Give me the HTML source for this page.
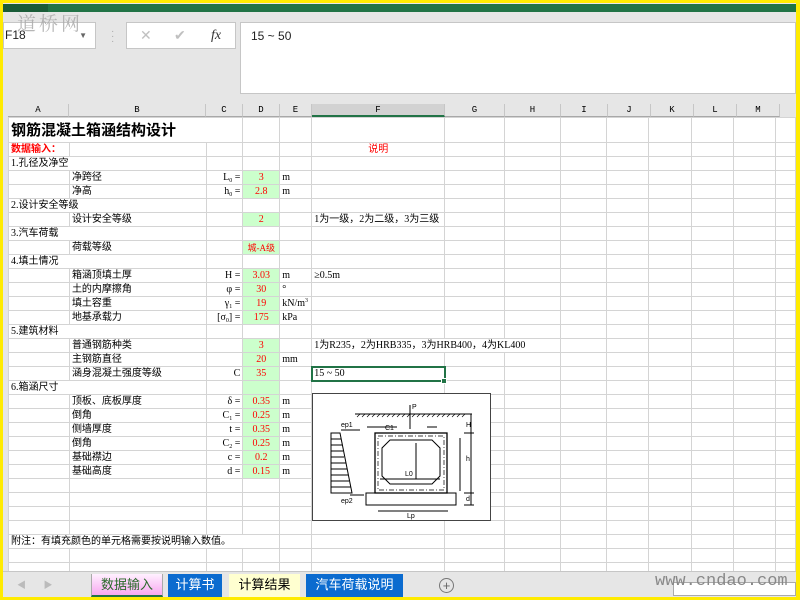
<!DOCTYPE html>
<html><head><meta charset="utf-8"><style>
*{margin:0;padding:0;box-sizing:border-box}
body{width:800px;height:600px;overflow:hidden;background:#ffeb00;position:relative;font-family:"Liberation Sans","Noto Sans CJK SC",sans-serif}
.abs{position:absolute}
#app{position:absolute;left:3px;top:3px;width:793px;height:594px;background:#e6e6e6;overflow:hidden}
table{position:absolute;left:5px;top:114px;border-collapse:collapse;table-layout:fixed;background:#fff}
td{border:1px solid #d4d4d4;height:14px;max-height:14px;font-size:10px;line-height:12px;padding:0 2px;white-space:nowrap;overflow:visible;font-family:"Liberation Serif","Noto Sans CJK SC",serif;color:#000}
tr{height:14px}
tr.t,tr.t td{height:25px}
sub,sup{font-size:6px;line-height:0;vertical-align:baseline;position:relative}
sub{top:2px}sup{top:-4px}
td.g{background:#ccffcc}
.r{color:#f00;text-align:center}
.c{text-align:right}
.hd{position:absolute;top:101px;height:13px;font-family:"Liberation Mono",monospace;font-size:9px;text-align:center;line-height:13px;border-right:1px solid #c6c6c6;border-bottom:1px solid #a8a8a8}
.tab{position:absolute;top:571px;height:23px;font-size:13px;line-height:22px;text-align:center;font-family:"Liberation Sans","Noto Sans CJK SC",sans-serif}
</style></head><body>
<div id="app">
<div class="abs" style="left:0;top:1px;width:793px;height:8px;background:#217346"></div>
<div class="abs" style="left:0;top:1px;width:45px;height:8px;background:#1a5c38"></div>
<div class="abs" style="left:0;top:19px;width:93px;height:27px;background:#fff;border:1px solid #c6c6c6;font-size:12px;line-height:25px;color:#222;padding-left:1px">F18<span style="position:absolute;right:8px;top:0;font-size:8px;color:#666">▼</span></div>
<div class="abs" style="left:14px;top:6px;font-size:19px;color:#aaa;font-family:'Noto Serif CJK SC',serif;letter-spacing:3px;opacity:.85">道桥网</div>
<div class="abs" style="left:108px;top:26px;color:#aaa;font-size:10px;line-height:5px">·<br>·<br>·</div>
<div class="abs" style="left:123px;top:19px;width:110px;height:27px;background:#fff;border:1px solid #c6c6c6;font-size:14px;line-height:25px;color:#c0c0c0">
<span style="position:absolute;left:13px">✕</span><span style="position:absolute;left:47px">✔</span><span style="position:absolute;left:84px;color:#333;font-style:italic;font-family:'Liberation Serif',serif">fx</span></div>
<div class="abs" style="left:237px;top:19px;width:556px;height:72px;background:#fff;border:1px solid #c6c6c6;font-size:12px;padding:6px 0 0 10px;color:#222">15 ~ 50</div>

<div class="hd" style="left:5px;width:61px">A</div>
<div class="hd" style="left:66px;width:137px">B</div>
<div class="hd" style="left:203px;width:37px">C</div>
<div class="hd" style="left:240px;width:37px">D</div>
<div class="hd" style="left:277px;width:32px">E</div>
<div class="hd" style="left:309px;width:133px;background:#d2d2d2;border-bottom:2px solid #217346">F</div>
<div class="hd" style="left:442px;width:60px">G</div>
<div class="hd" style="left:502px;width:56px">H</div>
<div class="hd" style="left:558px;width:47px">I</div>
<div class="hd" style="left:605px;width:43px">J</div>
<div class="hd" style="left:648px;width:43px">K</div>
<div class="hd" style="left:691px;width:43px">L</div>
<div class="hd" style="left:734px;width:43px">M</div>

<table>
<colgroup><col style="width:61px"><col style="width:137px"><col style="width:37px"><col style="width:37px"><col style="width:32px"><col style="width:133px"><col style="width:60px"><col style="width:56px"><col style="width:47px"><col style="width:43px"><col style="width:43px"><col style="width:43px"><col style="width:43px"><col style="width:20px"></colgroup>
<tr class="t"><td colspan="2" style="font-size:15px;font-weight:bold;font-family:'Noto Sans CJK SC',sans-serif;border-right-color:transparent">钢筋混凝土箱涵结构设计</td><td></td><td></td><td></td><td></td><td></td><td></td><td></td><td></td><td></td><td></td><td></td><td></td></tr>
<tr><td style="color:#f00;font-weight:bold">数据输入：</td><td></td><td></td><td></td><td></td><td class="r">说明</td><td></td><td></td><td></td><td></td><td></td><td></td><td></td><td></td></tr>
<tr><td colspan="2">1.孔径及净空</td><td></td><td></td><td></td><td></td><td></td><td></td><td></td><td></td><td></td><td></td><td></td><td></td></tr>
<tr><td></td><td>净跨径</td><td class="c">L<sub>0</sub> =</td><td class="g r">3</td><td>m</td><td></td><td></td><td></td><td></td><td></td><td></td><td></td><td></td><td></td></tr>
<tr><td></td><td>净高</td><td class="c">h<sub>0</sub> =</td><td class="g r">2.8</td><td>m</td><td></td><td></td><td></td><td></td><td></td><td></td><td></td><td></td><td></td></tr>
<tr><td colspan="2">2.设计安全等级</td><td></td><td></td><td></td><td></td><td></td><td></td><td></td><td></td><td></td><td></td><td></td><td></td></tr>
<tr><td></td><td>设计安全等级</td><td></td><td class="g r">2</td><td></td><td>1为一级，2为二级，3为三级</td><td></td><td></td><td></td><td></td><td></td><td></td><td></td><td></td></tr>
<tr><td colspan="2">3.汽车荷载</td><td></td><td></td><td></td><td></td><td></td><td></td><td></td><td></td><td></td><td></td><td></td><td></td></tr>
<tr><td></td><td>荷载等级</td><td></td><td class="g r" style="font-size:9px">城-A级</td><td></td><td></td><td></td><td></td><td></td><td></td><td></td><td></td><td></td><td></td></tr>
<tr><td colspan="2">4.填土情况</td><td></td><td></td><td></td><td></td><td></td><td></td><td></td><td></td><td></td><td></td><td></td><td></td></tr>
<tr><td></td><td>箱涵顶填土厚</td><td class="c">H =</td><td class="g r">3.03</td><td>m</td><td>≥0.5m</td><td></td><td></td><td></td><td></td><td></td><td></td><td></td><td></td></tr>
<tr><td></td><td>土的内摩擦角</td><td class="c">φ =</td><td class="g r">30</td><td>°</td><td></td><td></td><td></td><td></td><td></td><td></td><td></td><td></td><td></td></tr>
<tr><td></td><td>填土容重</td><td class="c">γ<sub>1</sub> =</td><td class="g r">19</td><td>kN/m<sup>3</sup></td><td></td><td></td><td></td><td></td><td></td><td></td><td></td><td></td><td></td></tr>
<tr><td></td><td>地基承载力</td><td class="c">[σ<sub>0</sub>] =</td><td class="g r">175</td><td>kPa</td><td></td><td></td><td></td><td></td><td></td><td></td><td></td><td></td><td></td></tr>
<tr><td colspan="2">5.建筑材料</td><td></td><td></td><td></td><td></td><td></td><td></td><td></td><td></td><td></td><td></td><td></td><td></td></tr>
<tr><td></td><td>普通钢筋种类</td><td></td><td class="g r">3</td><td></td><td colspan="3">1为R235，2为HRB335，3为HRB400，4为KL400</td><td></td><td></td><td></td><td></td><td></td><td></td></tr>
<tr><td></td><td>主钢筋直径</td><td></td><td class="g r">20</td><td>mm</td><td></td><td></td><td></td><td></td><td></td><td></td><td></td><td></td><td></td></tr>
<tr><td></td><td>涵身混凝土强度等级</td><td class="c">C</td><td class="g r">35</td><td></td><td style="outline:2px solid #217346;outline-offset:-1px">15 ~ 50</td><td></td><td></td><td></td><td></td><td></td><td></td><td></td><td></td></tr>
<tr><td colspan="2">6.箱涵尺寸</td><td></td><td class="g"></td><td></td><td></td><td></td><td></td><td></td><td></td><td></td><td></td><td></td><td></td></tr>
<tr><td></td><td>顶板、底板厚度</td><td class="c">δ =</td><td class="g r">0.35</td><td>m</td><td></td><td></td><td></td><td></td><td></td><td></td><td></td><td></td><td></td></tr>
<tr><td></td><td>倒角</td><td class="c">C<sub>1</sub> =</td><td class="g r">0.25</td><td>m</td><td></td><td></td><td></td><td></td><td></td><td></td><td></td><td></td><td></td></tr>
<tr><td></td><td>侧墙厚度</td><td class="c">t =</td><td class="g r">0.35</td><td>m</td><td></td><td></td><td></td><td></td><td></td><td></td><td></td><td></td><td></td></tr>
<tr><td></td><td>倒角</td><td class="c">C<sub>2</sub> =</td><td class="g r">0.25</td><td>m</td><td></td><td></td><td></td><td></td><td></td><td></td><td></td><td></td><td></td></tr>
<tr><td></td><td>基础襟边</td><td class="c">c =</td><td class="g r">0.2</td><td>m</td><td></td><td></td><td></td><td></td><td></td><td></td><td></td><td></td><td></td></tr>
<tr><td></td><td>基础高度</td><td class="c">d =</td><td class="g r">0.15</td><td>m</td><td></td><td></td><td></td><td></td><td></td><td></td><td></td><td></td><td></td></tr>
<tr><td></td><td></td><td></td><td></td><td></td><td></td><td></td><td></td><td></td><td></td><td></td><td></td><td></td><td></td></tr>
<tr><td></td><td></td><td></td><td></td><td></td><td></td><td></td><td></td><td></td><td></td><td></td><td></td><td></td><td></td></tr>
<tr><td></td><td></td><td></td><td></td><td></td><td></td><td></td><td></td><td></td><td></td><td></td><td></td><td></td><td></td></tr>
<tr><td></td><td></td><td></td><td></td><td></td><td></td><td></td><td></td><td></td><td></td><td></td><td></td><td></td><td></td></tr>
<tr><td colspan="4">附注：有填充颜色的单元格需要按说明输入数值。</td><td></td><td></td><td></td><td></td><td></td><td></td><td></td><td></td><td></td><td></td></tr>
<tr><td></td><td></td><td></td><td></td><td></td><td></td><td></td><td></td><td></td><td></td><td></td><td></td><td></td><td></td></tr>
<tr><td></td><td></td><td></td><td></td><td></td><td></td><td></td><td></td><td></td><td></td><td></td><td></td><td></td><td></td></tr>
</table>
<div class="abs" style="left:438px;top:375px;width:6px;height:6px;background:#217346;border:1px solid #fff"></div>

<svg class="abs" style="left:309px;top:390px" width="179" height="128" viewBox="0 0 179 128">
<rect x="0.5" y="0.5" width="178" height="127" fill="#fff" stroke="#444"/>
<g stroke="#000" fill="none" stroke-width="1">
<line x1="43" y1="21" x2="160" y2="21"/>
<g stroke-width="0.7">
<path d="M45 24l3-3M50 24l3-3M55 24l3-3M60 24l3-3M65 24l3-3M70 24l3-3M75 24l3-3M80 24l3-3M85 24l3-3M90 24l3-3M95 24l3-3M100 24l3-3M105 24l3-3M110 24l3-3M115 24l3-3M120 24l3-3M125 24l3-3M130 24l3-3M135 24l3-3M140 24l3-3M145 24l3-3M150 24l3-3"/>
</g>
<line x1="98" y1="12" x2="98" y2="36"/>
<rect x="63" y="40" width="72" height="60" stroke-width="1.3"/>
<rect x="66" y="43" width="66" height="54" stroke-dasharray="5 2 1 2" stroke-width="0.7"/>
<path d="M78 47h42l8 8v28l-8 8h-42l-8-8v-28z"/>
<rect x="54" y="100" width="90" height="12"/>
<path d="M19 40h9l12 60h-21z"/>
<path d="M19 46h10M19 52h11M19 58h12M19 64h13M19 70h15M19 76h16M19 82h17M19 88h18M19 94h20"/>
<line x1="68" y1="86" x2="128" y2="86"/>
<line x1="104" y1="50" x2="104" y2="86"/>
<line x1="159" y1="21" x2="159" y2="112"/>
<line x1="148" y1="45" x2="148" y2="98"/>
<line x1="66" y1="118" x2="136" y2="118"/>
<line x1="29" y1="37" x2="48" y2="37"/>
<line x1="38" y1="102" x2="52" y2="102"/>
<path d="M55 34h30M115 34h10M152 40h10M152 100h10M152 112h10"/>
</g>
<g font-size="7" font-family="Liberation Sans,sans-serif" fill="#000">
<text x="100" y="16">P</text><text x="29" y="34">ep1</text><text x="29" y="110">ep2</text>
<text x="93" y="83">L0</text><text x="95" y="125">Lp</text><text x="73" y="37">C1</text>
<text x="154" y="34">H</text><text x="154" y="68">h</text><text x="154" y="108">d</text>
</g>
</svg>

<div class="abs" style="left:0;top:568px;width:793px;height:26px;background:#e6e6e6;border-top:1px solid #c6c6c6"></div>
<div class="abs" style="left:14px;top:575px;color:#bbb;font-size:9px">◀&nbsp;&nbsp;&nbsp;&nbsp;&nbsp;&nbsp;&nbsp;▶</div>
<div class="tab" style="left:88px;width:72px;background:linear-gradient(#fff0ff,#f8a8f0);color:#2a6a2a;border-bottom:2px solid #217346;border-left:1px solid #aaa;border-right:1px solid #aaa">数据输入</div>
<div class="tab" style="left:165px;width:54px;background:#0b6bcf;color:#fff">计算书</div>
<div class="tab" style="left:226px;width:71px;background:#ffffd0;color:#000">计算结果</div>
<div class="tab" style="left:303px;width:97px;background:#0b6bcf;color:#fff">汽车荷载说明</div>
<div class="abs" style="left:436px;top:575px;width:15px;height:15px;border:1px solid #777;border-radius:50%;text-align:center;line-height:13px;color:#666;font-size:13px">+</div>
<div class="abs" style="left:670px;top:579px;width:123px;height:14px;background:#fff;border:1px solid #aaa"></div>
<div class="abs" style="left:652px;top:569px;font-family:'Liberation Mono',monospace;font-size:17px;color:#888">www.cndao.com</div>
</div>
</body></html>
